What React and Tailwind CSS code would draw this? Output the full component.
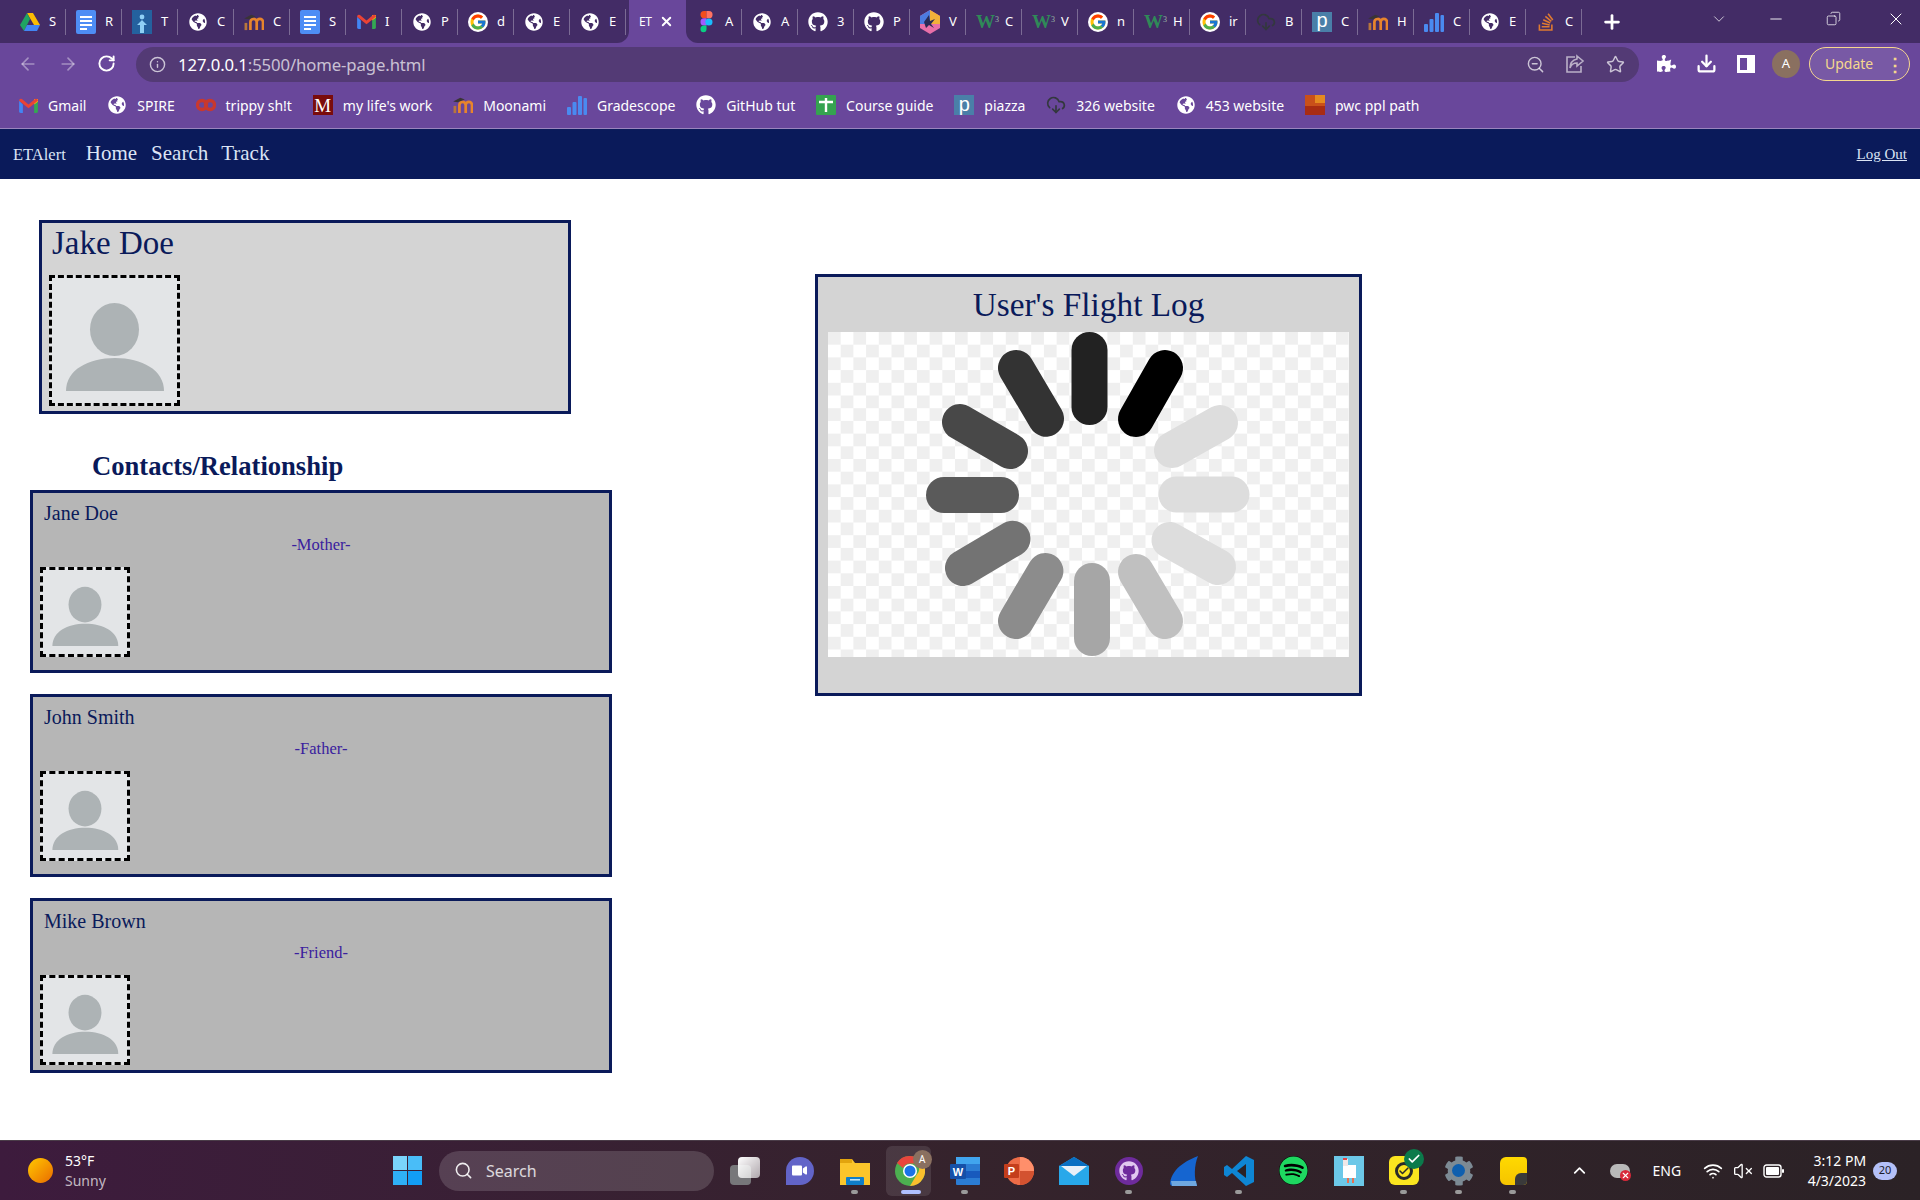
import { ArrowLeft, ArrowRight, RotateCw, Info, ZoomOut, Star, Download, Plus, X, ChevronDown, Minus, Copy, Search, ChevronUp, Wifi, VolumeX, CloudDownload, Check } from 'lucide-react';
import { FaGlobeAmericas, FaGithub, FaSpotify, FaStackOverflow, FaPuzzlePiece, FaVideo, FaCog } from 'react-icons/fa';
import { FcGoogle } from 'react-icons/fc';

const Globe = () => <FaGlobeAmericas className="w-[18px] h-[18px] text-white" />;
const Github = () => <FaGithub className="w-[20px] h-[20px] text-white" />;
const Google = () => <FcGoogle className="w-[20px] h-[20px] bg-white rounded-full p-[1px]" />;

const Moodle = () => (
    <svg viewBox="0 0 22 20" className="w-[20px] h-[18px]" fill="none">
        <path d="M7 19V10a3.5 3.5 0 0 1 7 0v9M14 10a3.5 3.5 0 0 1 7 0v9" stroke="#e8842c" strokeWidth="3" />
        <path d="M2 19v-8" stroke="#b8763c" strokeWidth="3" />
        <path d="M0 6l8-4 5 2-8 3z" fill="#3a3436" />
    </svg>
);
const Drive = () => (
    <svg viewBox="0 0 20 18" className="w-[20px] h-[18px]">
        <path d="M7 0h6l7 12h-6z" fill="#fbbc04" />
        <path d="M7 0l3 6-6 12-4-6z" fill="#1fa463" />
        <path d="M4 18l3-6h13l-3 6z" fill="#4285f4" />
    </svg>
);
const Docs = () => (
    <svg viewBox="0 0 20 24" className="w-[20px] h-[24px]">
        <rect width="20" height="24" rx="2" fill="#4e8df5" />
        <path d="M4 7h12M4 11h12M4 15h12M4 19h7" stroke="#fff" strokeWidth="2" />
    </svg>
);
const Person = () => (
    <svg viewBox="0 0 20 24" className="w-[20px] h-[24px]">
        <rect width="20" height="24" fill="#24619e" />
        <circle cx="10" cy="7" r="2.4" fill="#8fd0f5" />
        <path d="M10 10l5 5h-3v8H8v-8H5z" fill="#8fd0f5" />
    </svg>
);
const Gmail = () => (
    <svg viewBox="0 0 20 16" className="w-[19px] h-[15px]">
        <path d="M0 3v11a2 2 0 0 0 2 2h2V7z" fill="#4285f4" />
        <path d="M20 3v11a2 2 0 0 1-2 2h-2V7z" fill="#34a853" />
        <path d="M16 1l4 0v3l-4 3z" fill="#fbbc04" />
        <path d="M0 3a2 2 0 0 1 3-2l7 6 7-6a2 2 0 0 1 3 2l-10 8z" fill="#ea4335" />
    </svg>
);
const Figma = () => (
    <svg viewBox="0 0 12 22" className="w-[13px] h-[22px]">
        <path d="M0 3.6A3.6 3.6 0 0 1 3.6 0H6v7.3H3.6A3.6 3.6 0 0 1 0 3.6z" fill="#f24e1e" />
        <path d="M6 0h2.4a3.6 3.6 0 0 1 0 7.3H6z" fill="#ff7262" />
        <path d="M0 11a3.6 3.6 0 0 1 3.6-3.7H6v7.3H3.6A3.6 3.6 0 0 1 0 11z" fill="#a259ff" />
        <circle cx="8.4" cy="11" r="3.6" fill="#1abcfe" />
        <path d="M0 18.3a3.6 3.6 0 0 1 3.6-3.7H6v3.7a3 3 0 0 1-6 0z" fill="#0acf83" />
    </svg>
);
const Hex = () => (
    <svg viewBox="0 0 20 24" className="w-[20px] h-[24px]">
        <path d="M10 0l10 6v12l-10 6-10-6V6z" fill="#e86fa8" />
        <path d="M10 0l10 6v8H10z" fill="#f2b13a" />
        <path d="M10 0L0 6v8h10z" fill="#4c7be0" />
        <path d="M4 12l5-7 1 6 5-2-4 5 3 4-5-3-3 3z" fill="#2a2a55" />
    </svg>
);
const W3 = () => (
    <span className="relative w-[20px] h-[18px] font-['Liberation_Serif',serif] font-bold text-[19px] leading-[18px] text-[#2f8a58] tracking-[-1px]">
        W<span className="absolute -top-[2px] -right-[2px] text-[8px] text-[#9ab8a8] font-normal">3</span>
    </span>
);
const DarkCloud = () => <CloudDownload className="w-[20px] h-[20px] text-[#33383e]" />;
const Piazza = () => (
    <span className="flex w-[20px] h-[20px] bg-[#4a7fa8] items-center justify-center font-['Liberation_Sans',sans-serif] text-white text-[20px] leading-none pb-[3px]">p</span>
);
const Bars = () => (
    <svg viewBox="0 0 20 20" className="w-[20px] h-[20px]" fill="#4a8af0">
        <rect x="0" y="12" width="4" height="8" rx="1" />
        <rect x="5.5" y="7" width="4" height="13" rx="1" />
        <rect x="11" y="1" width="4" height="19" rx="1" />
        <rect x="16.5" y="3" width="3.5" height="17" rx="1" />
    </svg>
);
const Stack = () => <FaStackOverflow className="w-[20px] h-[20px] text-[#e07a30]" />;
const Trippy = () => (
    <svg viewBox="0 0 20 14" className="w-[20px] h-[14px]" fill="none" stroke="#c8382e" strokeWidth="3.4">
        <circle cx="6" cy="7" r="4.5" />
        <circle cx="14" cy="7" r="4.5" />
    </svg>
);
const Maroon = () => (
    <span className="flex w-[20px] h-[20px] bg-[#7a0c0c] items-center justify-center font-['Liberation_Serif',serif] text-white text-[19px] leading-none">M</span>
);
const Course = () => (
    <svg viewBox="0 0 20 20" className="w-[20px] h-[20px]">
        <rect width="20" height="20" rx="1" fill="#35a350" />
        <path d="M3 7h14M10 3v14" stroke="#fff" strokeWidth="2.4" />
    </svg>
);
const Pwc = () => (
    <svg viewBox="0 0 20 20" className="w-[20px] h-[20px]">
        <rect width="20" height="20" fill="#c9501a" />
        <rect x="10" width="10" height="8" fill="#e58a20" />
        <rect y="11" width="20" height="9" fill="#a82c12" />
    </svg>
);

const leftTabs = [
    [Drive, 'S'], [Docs, 'R'], [Person, 'T'], [Globe, 'C'], [Moodle, 'C'], [Docs, 'S'],
    [Gmail, 'I'], [Globe, 'P'], [Google, 'd'], [Globe, 'E'], [Globe, 'E'],
];
const rightTabs = [
    [Figma, 'A'], [Globe, 'A'], [Github, '3'], [Github, 'P'], [Hex, 'V'], [W3, 'C'], [W3, 'V'],
    [Google, 'n'], [W3, 'H'], [Google, 'ir'], [DarkCloud, 'B'], [Piazza, 'C'], [Moodle, 'H'],
    [Bars, 'C'], [Globe, 'E'], [Stack, 'C'],
];
const bookmarks = [
    [Gmail, 'Gmail'], [Globe, 'SPIRE'], [Trippy, 'trippy sh!t'], [Maroon, "my life's work"], [Moodle, 'Moonami'],
    [Bars, 'Gradescope'], [Github, 'GitHub tut'], [Course, 'Course guide'], [Piazza, 'piazza'], [DarkCloud, '326 website'],
    [Globe, '453 website'], [Pwc, 'pwc ppl path'],
];
const contacts = [
    { name: 'Jane Doe', role: '-Mother-', h: 'h-[183px]' },
    { name: 'John Smith', role: '-Father-', h: 'h-[183px]' },
    { name: 'Mike Brown', role: '-Friend-', h: 'h-[175px]' },
];
const spokes = [
    [261.5, 18, 261.5, 75, '#222222'],
    [337, 36, 308, 87, '#000000'],
    [392, 91, 344, 118, '#dddddd'],
    [403.5, 162.5, 348.5, 162.5, '#dddddd'],
    [390, 235, 341.5, 208, '#dddddd'],
    [337, 289, 308, 240, '#c0c0c0'],
    [264, 306, 264, 249, '#a6a6a6'],
    [188, 289, 217.4, 239, '#8c8c8c'],
    [135, 236, 184.5, 206.7, '#737373'],
    [116, 163, 173, 163, '#5a5a5a'],
    [132, 90, 182, 119, '#484848'],
    [188, 36, 218, 86.7, '#333333'],
];

const Tab = ({ icon: Icon, label }) => (
    <div className="flex items-center w-[56px] h-[26px] flex-none border-r border-white/30 overflow-hidden">
        <span className="flex w-[20px] ml-[10px] justify-center flex-none"><Icon /></span>
        <span className="ml-[9px] text-[13px] text-white">{label}</span>
    </div>
);

const Avatar = ({ size }) => (
    <div className={`${size} border-[3px] border-dashed border-black bg-[#e3e5e7] flex-none`}>
        <svg viewBox="0 0 125 125" className="w-full h-full">
            <ellipse cx="62.5" cy="51.5" rx="24.5" ry="26.5" fill="#adb3b5" />
            <path d="M14 113C14 92 36 80 63 80C90 80 112 92 112 113Z" fill="#adb3b5" />
        </svg>
    </div>
);

const TaskIcon = ({ children, dot }) => (
    <div className="relative w-[30px] h-[30px] flex items-center justify-center flex-none">
        {children}
        {dot && <span className="absolute left-[11px] -bottom-[8px] w-[7px] h-[4px] rounded-full bg-[#9a9a9a]" />}
    </div>
);

const BrowserChrome = () => (
    <div className="flex-none font-['Noto_Sans',sans-serif] bg-[#69479b]">
        <div className="flex h-[43px]">
            <div className="flex items-center pl-[10px] w-[629px] bg-[#432c66] rounded-br-xl flex-none">
                {leftTabs.map(([icon, label], i) => (
                    <Tab key={i} icon={icon} label={label} />
                ))}
            </div>
            <div className="flex items-center w-[57px] flex-none pl-[10px] rounded-t-xl text-[12px] text-white">
                <span className="w-[17px] tracking-[-0.5px]">ET</span>
                <X className="w-[15px] h-[15px] ml-[3px] text-white" strokeWidth={3} />
            </div>
            <div className="flex items-center flex-1 bg-[#432c66] rounded-bl-xl">
                {rightTabs.map(([icon, label], i) => (
                    <Tab key={i} icon={icon} label={label} />
                ))}
                <Plus className="w-[22px] h-[22px] ml-[19px] text-white" strokeWidth={3} />
                <ChevronDown className="w-[18px] h-[18px] ml-[87px] -mt-[6px] text-white/80" strokeWidth={1.2} />
                <Minus className="w-[18px] h-[18px] ml-[39px] -mt-[6px] text-white" strokeWidth={1.2} />
                <Copy className="w-[15px] h-[15px] ml-[41px] -mt-[6px] text-white -scale-x-100" strokeWidth={1.2} />
                <X className="w-[20px] h-[20px] ml-[45px] -mt-[6px] text-white" strokeWidth={1.2} />
            </div>
        </div>
        <div className="flex items-center h-[41px]">
            <ArrowLeft className="w-[20px] h-[20px] ml-[18px] text-white/40" strokeWidth={2} />
            <ArrowRight className="w-[20px] h-[20px] ml-[20px] text-white/40" strokeWidth={2} />
            <RotateCw className="w-[19px] h-[19px] ml-[19px] text-white" strokeWidth={2.4} />
            <div className="flex items-center w-[1503px] h-[35px] ml-[20px] mt-[1px] rounded-full bg-[#533a75]">
                <Info className="w-[17px] h-[17px] ml-[13px] text-white/70" strokeWidth={2} />
                <span className="ml-[12px] mt-[1px] text-[16.7px] tracking-[-0.1px] text-white">127.0.0.1<span className="text-white/70">:5500/home-page.html</span></span>
                <ZoomOut className="w-[19px] h-[19px] ml-auto text-white/70" strokeWidth={1.8} />
                <svg viewBox="0 0 20 20" className="w-[20px] h-[20px] ml-[20px]" fill="none" stroke="#ffffff" strokeOpacity="0.6" strokeWidth="1.6">
                    <path d="M10 3H2v15h14v-6" />
                    <path d="M12 2l6 5-6 5V9C8 9 6 11 5 14c0-5 3-8 7-9z" />
                </svg>
                <Star className="w-[19px] h-[19px] ml-[21px] mr-[14px] text-white/70" strokeWidth={1.8} />
            </div>
            <FaPuzzlePiece className="w-[19px] h-[19px] ml-[18px] text-white" />
            <Download className="w-[21px] h-[21px] ml-[20px] text-white" strokeWidth={2.6} />
            <div className="w-[18px] h-[18px] ml-[20px] border-[3px] border-r-[8px] border-white" />
            <div className="flex w-[28px] h-[28px] ml-[17px] rounded-full bg-[#8a7060] items-center justify-center text-[13px] text-white">A</div>
            <div className="flex items-center w-[101px] h-[34px] ml-[9px] rounded-full border border-[#f5d78e] bg-white/10 text-[14px] text-[#f5d78e]">
                <span className="ml-[15px]">Update</span>
                <span className="ml-[13px] text-[18px] leading-none font-bold">⋮</span>
            </div>
        </div>
        <div className="flex items-center gap-[20.9px] h-[45px] pl-[18px] pb-[2px] border-b border-[#9a85bd]">
            {bookmarks.map(([Icon, label], i) => (
                <div key={i} className="flex items-center gap-[10px] flex-none">
                    <span className="flex w-[20px] justify-center"><Icon /></span>
                    <span className="text-[14px] text-white">{label}</span>
                </div>
            ))}
        </div>
    </div>
);

const Navbar = () => (
    <div className="flex flex-none items-center h-[50px] px-[13px] bg-[#0a1a5a] text-[#dbe4f5]">
        <span className="mt-[1px] text-[16.5px] leading-[24px]">ETAlert</span>
        <span className="ml-[20px] -mt-[1px] text-[21px]">Home</span>
        <span className="ml-[14px] -mt-[1px] text-[21px]">Search</span>
        <span className="ml-[13px] -mt-[1px] text-[21px]">Track</span>
        <span className="ml-auto text-[15px] underline">Log Out</span>
    </div>
);

const ContactCard = ({ name, role, h }) => (
    <div className={`${h} flex flex-col border-[3px] border-[#0a1a5a] bg-[#b6b6b6] overflow-hidden`}>
        <div className="pl-[11px] pt-[8px] text-[20px] leading-[24px] text-[#0a1a5a]">{name}</div>
        <div className="mt-[11px] text-center text-[16.5px] leading-[18px] text-[#3a209e]">{role}</div>
        <div className="mt-[13px] ml-[7px]"><Avatar size="w-[90px] h-[90px]" /></div>
    </div>
);

const Spinner = () => (
    <svg viewBox="0 0 521 325" className="block w-[521px] h-[325px] mt-[7px] mx-auto">
        <defs>
            <pattern id="checker" width="25.4" height="25.4" patternUnits="userSpaceOnUse">
                <rect width="25.4" height="25.4" fill="#ffffff" />
                <rect width="12.7" height="12.7" fill="#efefef" />
                <rect x="12.7" y="12.7" width="12.7" height="12.7" fill="#efefef" />
            </pattern>
        </defs>
        <rect width="521" height="325" fill="url(#checker)" />
        {spokes.map(([x1, y1, x2, y2, color], i) => (
            <line key={i} x1={x1} y1={y1} x2={x2} y2={y2} stroke={color} strokeWidth="36" strokeLinecap="round" />
        ))}
    </svg>
);

const Taskbar = () => (
    <div className="flex flex-none items-center h-[60px] border-t border-[#4a3c48] bg-gradient-to-r from-[#3d1b3d] via-[#35232c] to-[#2b2226] font-['Noto_Sans',sans-serif] text-white">
        <div className="w-[25px] h-[25px] ml-[28px] rounded-full bg-gradient-to-br from-[#ffc800] to-[#e86a00]" />
        <div className="ml-[12px] w-[60px] text-[14px] leading-[20px]">
            <div>53°F</div>
            <div className="text-white/70">Sunny</div>
        </div>
        <svg viewBox="0 0 29 29" className="w-[29px] h-[29px] ml-[268px] flex-none">
            <rect width="14" height="14" fill="#7ad4fb" />
            <rect x="15" width="14" height="14" fill="#49bdf8" />
            <rect y="15" width="14" height="14" fill="#2fb0f7" />
            <rect x="15" y="15" width="14" height="14" fill="#129df5" />
        </svg>
        <div className="flex items-center w-[275px] h-[40px] ml-[17px] rounded-full bg-white/15 flex-none">
            <Search className="w-[19px] h-[19px] ml-[15px] text-white/90" strokeWidth={2} />
            <span className="ml-[13px] text-[16px] text-white/80">Search</span>
        </div>
        <div className="flex items-center gap-[24.9px] ml-[16px]">
            <TaskIcon>
                <div className="relative w-[30px] h-[28px]">
                    <div className="absolute left-0 bottom-0 w-[21px] h-[20px] rounded-sm bg-[#77777a]" />
                    <div className="absolute right-0 top-0 w-[22px] h-[21px] rounded-sm bg-gradient-to-br from-white to-white/60" />
                </div>
            </TaskIcon>
            <TaskIcon>
                <div className="flex w-[28px] h-[28px] rounded-full rounded-bl-md bg-[#6264c8] items-center justify-center">
                    <FaVideo className="w-[15px] h-[15px] text-white" />
                </div>
            </TaskIcon>
            <TaskIcon dot>
                <svg viewBox="0 0 30 28" className="w-[30px] h-[28px]">
                    <path d="M0 2h12l3 4h15v22H0z" fill="#fbc52b" />
                    <path d="M0 2h12v4H0z" fill="#e2a40e" />
                    <rect x="6" y="20" width="18" height="8" rx="1" fill="#0f7ec9" />
                    <rect x="10" y="22" width="10" height="1.6" fill="#bfe3f8" />
                </svg>
            </TaskIcon>
            <div className="relative flex-none w-[30px] h-[30px] flex items-center justify-center">
                <div className="absolute -left-[9px] -top-[10px] w-[45px] h-[50px] rounded-md bg-white/10" />
                <svg viewBox="0 0 30 30" className="relative w-[30px] h-[30px]">
                    <circle cx="15" cy="15" r="15" fill="#4caf50" />
                    <path d="M15 0a15 15 0 0 1 13 7.5H15A7.5 7.5 0 0 0 8 12L2 7A15 15 0 0 1 15 0z" fill="#e8453c" />
                    <path d="M28 7.5A15 15 0 0 1 15 30l6.5-11a7.5 7.5 0 0 0 0-11.5z" fill="#fbc02d" />
                    <circle cx="15" cy="15" r="7" fill="#fff" />
                    <circle cx="15" cy="15" r="5.5" fill="#1a73e8" />
                </svg>
                <div className="absolute -right-[7px] -top-[6px] flex w-[19px] h-[19px] rounded-full bg-[#8a7060] items-center justify-center text-[10px]">A</div>
                <span className="absolute left-[6px] -bottom-[8px] w-[20px] h-[4px] rounded-full bg-[#b0c0ff]" />
            </div>
            <TaskIcon dot>
                <svg viewBox="0 0 30 28" className="w-[30px] h-[28px]">
                    <rect x="6" width="24" height="28" rx="1" fill="#2b7cd3" />
                    <rect x="6" width="24" height="7" fill="#41a5ee" />
                    <rect x="6" y="14" width="24" height="7" fill="#185abd" />
                    <rect y="7" width="16" height="15" rx="1" fill="#1550a8" />
                    <text x="8" y="19" textAnchor="middle" fontSize="11" fontWeight="700" fill="#fff" fontFamily="Liberation Sans">W</text>
                </svg>
            </TaskIcon>
            <TaskIcon>
                <svg viewBox="0 0 30 30" className="w-[30px] h-[30px]">
                    <circle cx="16" cy="15" r="14" fill="#ed6c47" />
                    <path d="M16 1a14 14 0 0 1 14 14H16z" fill="#ff8f6b" />
                    <path d="M30 15a14 14 0 0 1-14 14V15z" fill="#d35230" />
                    <rect y="8" width="15" height="14" rx="1" fill="#c43e1c" />
                    <text x="7.5" y="19" textAnchor="middle" fontSize="11" fontWeight="700" fill="#fff" fontFamily="Liberation Sans">P</text>
                </svg>
            </TaskIcon>
            <TaskIcon>
                <svg viewBox="0 0 30 28" className="w-[30px] h-[28px]">
                    <path d="M15 0L30 9v19H0V9z" fill="#28a8ea" />
                    <path d="M15 0L30 9H0z" fill="#0a6fc2" />
                    <path d="M2 9h26L15 19z" fill="#e8f0f8" />
                </svg>
            </TaskIcon>
            <TaskIcon dot>
                <div className="flex w-[28px] h-[28px] rounded-full bg-[#6e2b9c] items-center justify-center">
                    <FaGithub className="w-[20px] h-[20px] text-[#e0c8f0]" />
                </div>
            </TaskIcon>
            <TaskIcon>
                <svg viewBox="0 0 30 30" className="w-[30px] h-[30px]">
                    <path d="M29 0C20 4 4 10 1 27c0 2 1 3 3 3h24c-3-8-3-20 1-30z" fill="#1565d0" />
                    <path d="M2 25h25l1 5H3z" fill="#6fa8e0" />
                </svg>
            </TaskIcon>
            <TaskIcon dot>
                <svg viewBox="0 0 30 30" className="w-[30px] h-[30px]">
                    <path d="M22 0l8 4v22l-8 4L8 17l-5 4-3-2V11l3-2 5 4z" fill="#0e86d4" />
                    <path d="M22 8L13 15l9 7z" fill="#2b2226" />
                </svg>
            </TaskIcon>
            <TaskIcon>
                <div className="w-[29px] h-[29px] rounded-full bg-black"><FaSpotify className="w-[29px] h-[29px] text-[#1ed760]" /></div>
            </TaskIcon>
            <TaskIcon>
                <svg viewBox="0 0 30 30" className="w-[30px] h-[30px]">
                    <rect width="30" height="30" fill="#6cc8e8" />
                    <rect x="9" y="9" width="13" height="13" fill="#fff" />
                    <rect x="9" y="3" width="5" height="7" fill="#f0e8e8" />
                    <rect x="9" y="2" width="4" height="2" fill="#e04848" />
                    <rect x="13" y="22" width="2" height="5" fill="#e87050" />
                    <rect x="18" y="22" width="2" height="5" fill="#e87050" />
                </svg>
            </TaskIcon>
            <TaskIcon dot>
                <div className="relative flex w-[30px] h-[29px] rounded-md bg-[#fbe51f] items-center justify-center">
                    <div className="flex w-[18px] h-[18px] rounded-full border-[3px] border-[#2a2a2a] items-center justify-center">
                        <Check className="w-[12px] h-[12px] text-[#2a2a2a]" strokeWidth={3} />
                    </div>
                    <div className="absolute -right-[5px] -top-[7px] flex w-[20px] h-[20px] rounded-full bg-[#0b7a4b] items-center justify-center">
                        <Check className="w-[14px] h-[14px] text-white" strokeWidth={3} />
                    </div>
                </div>
            </TaskIcon>
            <TaskIcon dot>
                <div className="relative flex items-center justify-center">
                    <FaCog className="w-[30px] h-[30px] text-[#7c8a94]" />
                    <div className="absolute w-[13px] h-[13px] rounded-full bg-[#0f5fae]" />
                </div>
            </TaskIcon>
            <TaskIcon dot>
                <div className="relative w-[27px] h-[28px] rounded-l-md rounded-r-sm bg-gradient-to-b from-[#ffd900] to-[#f5c400] overflow-hidden">
                    <div className="absolute right-0 bottom-0 w-[12px] h-[12px] bg-[#3a3a3a] rounded-tl-md" />
                </div>
            </TaskIcon>
        </div>
        <ChevronUp className="w-[19px] h-[19px] ml-[42px] text-white" strokeWidth={2.2} />
        <div className="relative ml-[21px] w-[20px] h-[14px] rounded-full bg-[#b9b9b9]">
            <div className="absolute -right-[1px] -bottom-[3px] flex w-[11px] h-[11px] rounded-full bg-[#d8293a] items-center justify-center">
                <X className="w-[9px] h-[9px] text-white" strokeWidth={3} />
            </div>
        </div>
        <span className="ml-[22px] text-[14px]">ENG</span>
        <Wifi className="w-[20px] h-[20px] ml-[22px] text-white" strokeWidth={2} />
        <VolumeX className="w-[20px] h-[20px] ml-[10px] text-white" strokeWidth={1.6} />
        <svg viewBox="0 0 21 14" className="w-[21px] h-[14px] ml-[10px]" fill="none">
            <rect x="1" y="1" width="17" height="12" rx="2.5" stroke="#fff" strokeWidth="1.4" />
            <rect x="3" y="3" width="13" height="8" rx="1" fill="#fff" />
            <rect x="19" y="5" width="2" height="4" rx="1" fill="#fff" />
        </svg>
        <div className="ml-[20px] w-[62px] text-right text-[14px] leading-[20px] whitespace-nowrap">
            <div>3:12 PM</div>
            <div>4/3/2023</div>
        </div>
        <div className="flex w-[24px] h-[18px] ml-[7px] rounded-full bg-[#b4c0f8] items-center justify-center text-[11px] text-[#1a1a2a]">20</div>
    </div>
);

export default function App() {
    return (
        <div className="relative flex flex-col w-[1920px] h-[1200px] overflow-hidden bg-white font-['Liberation_Serif',serif]">
            <BrowserChrome />
            <Navbar />
            <main className="flex flex-1 min-h-0">
                <div className="flex flex-col w-[612px] pl-[30px] flex-none">
                    <div className="flex flex-col w-[532px] h-[194px] ml-[9px] mt-[41px] flex-none border-[3px] border-[#0a1a5a] bg-[#d4d4d4]">
                        <div className="pl-[10px] pt-[1px] text-[33px] leading-[38px] text-[#0a1a5a]">Jake Doe</div>
                        <div className="mt-[13px] ml-[7px]"><Avatar size="w-[131px] h-[131px]" /></div>
                    </div>
                    <div className="flex items-center h-[76px] flex-none pl-[62px] pt-[30px] text-[26.6px] font-bold text-[#0a1a5a]">Contacts/Relationship</div>
                    <div className="flex flex-col gap-[21px]">
                        {contacts.map((c) => (
                            <ContactCard key={c.name} {...c} />
                        ))}
                    </div>
                </div>
                <div className="w-[547px] h-[422px] ml-[203px] mt-[95px] flex-none border-[3px] border-[#0a1a5a] bg-[#d4d4d4]">
                    <div className="pt-[8px] text-center text-[33.3px] leading-[40px] text-[#0a1a5a]">User's Flight Log</div>
                    <Spinner />
                </div>
            </main>
            <Taskbar />
        </div>
    );
}
